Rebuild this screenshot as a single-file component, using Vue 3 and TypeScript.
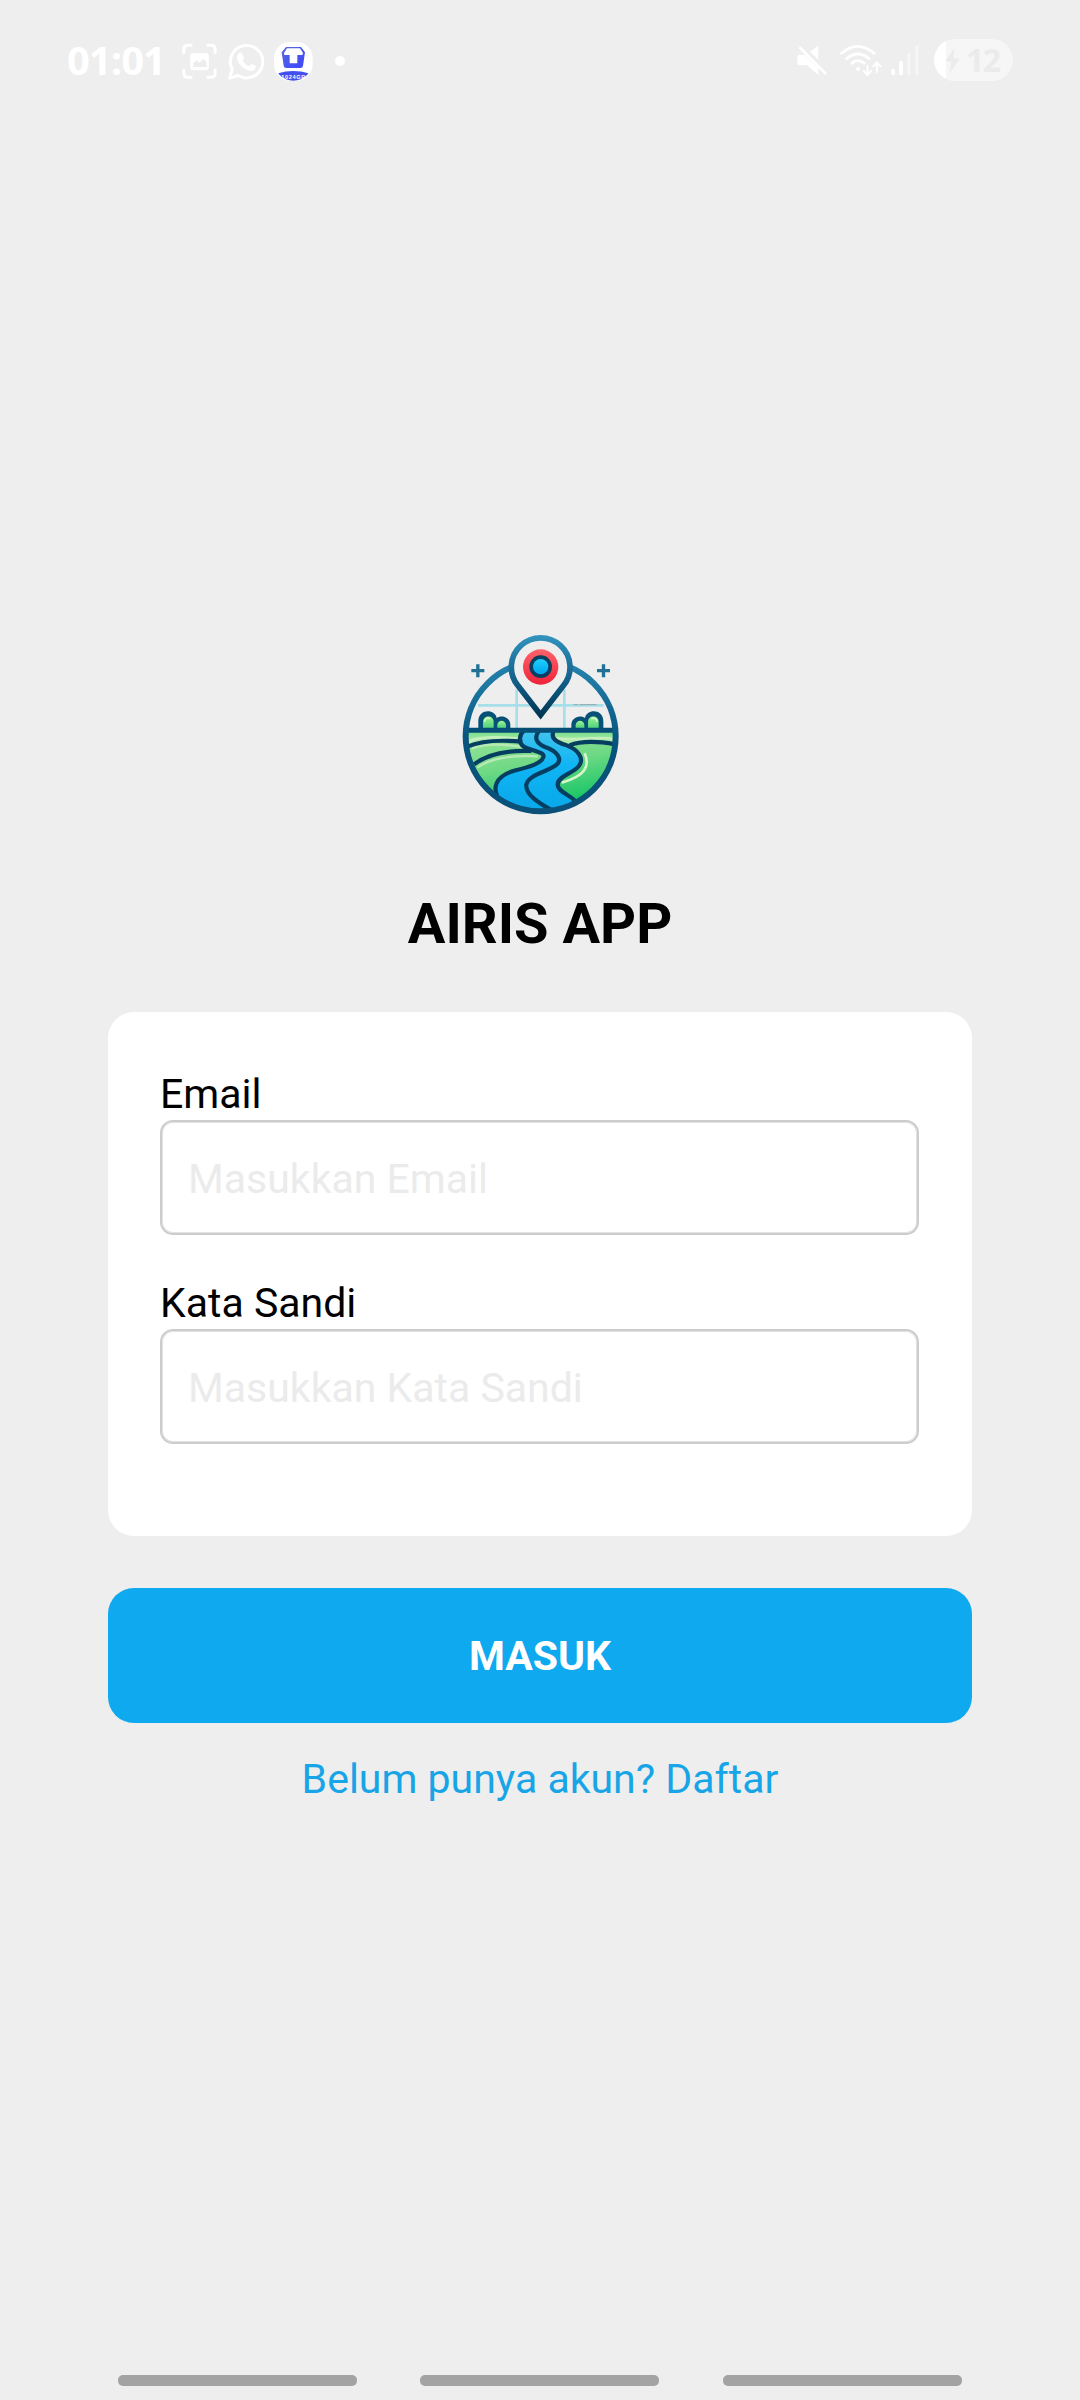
<script setup lang="ts">
import { ref } from 'vue'

interface Field {
  id: string
  label: string
  type: string
  placeholder: string
}

const fields: Field[] = [
  { id: 'email', label: 'Email', type: 'email', placeholder: 'Masukkan Email' },
  { id: 'password', label: 'Kata Sandi', type: 'password', placeholder: 'Masukkan Kata Sandi' },
]

const values = ref<Record<string, string>>({ email: '', password: '' })
</script>

<template>
  <div class="screen">
    <header class="status">
      <div class="status-left">
        <span class="clock">01:01</span>
        <svg class="capture" viewBox="396 0 104 240" width="35" height="80" fill="none" stroke="#fff" stroke-width="9" stroke-linecap="round">
          <path d="M401 98V88q0-12 12-12h10M473 76h10q12 0 12 12v10M495 150v10q0 12-12 12h-10M423 172h-10q-12 0-12-12v-10" />
          <rect x="420" y="99" width="56" height="52" rx="10" fill="#fff" stroke="none" />
          <path d="M429 141v-11l11-9 8 7 12-12 9 11v14z" fill="#ededed" stroke="none" />
        </svg>
        <svg class="whatsapp" viewBox="533 0 112 240" width="37" height="80">
          <path d="M541 175l8-27a49 49 0 1 1 18 19z" fill="none" stroke="#fff" stroke-width="9" stroke-linejoin="round" />
          <path d="M567 101c5-6 10-5 13 1l4 10c1 3-4 7-4 9 4 8 11 14 19 17 3 1 6-7 9-6l10 5c4 2 2 8-1 12-9 9-24 4-37-7-13-12-22-29-13-41z" fill="#fff" />
        </svg>
        <svg class="tera" viewBox="672 0 117 240" width="39" height="80">
          <defs>
            <clipPath id="badge"><circle cx="730" cy="124" r="58" /></clipPath>
            <linearGradient id="bucket" x1="0" y1="0" x2="1" y2="1">
              <stop offset="0" stop-color="#5869dc" />
              <stop offset="1" stop-color="#3c46ff" />
            </linearGradient>
          </defs>
          <rect x="672" y="66" width="116" height="116" rx="48" fill="#fff" />
          <path d="M708 81h45l12 16-6 40q-1 7-8 7h-42q-7 0-8-7l-6-40z" fill="url(#bucket)" />
          <path d="M711 85h39l9 14-2 6h-15v25h-23v-25h-16l-1-6z" fill="#fff" />
          <ellipse cx="730" cy="174" rx="60" ry="21" fill="#4350ee" clip-path="url(#badge)" />
          <text x="730" y="178" text-anchor="middle" textLength="72" class="badge-text">1024GB</text>
        </svg>
        <svg class="dot" viewBox="855 0 30 240" width="10" height="80"><circle cx="870" cy="123" r="15" fill="#fff" /></svg>
      </div>
      <div class="status-right">
        <svg viewBox="80 0 90 240" width="30" height="80" fill="#fff">
          <path d="M144 77v42l-25-24zM81 112q0-8 8-8h14l41 41v20l-34-29H89q-8 0-8-8z" />
          <path d="M98 82l73 75" stroke="#ededed" stroke-width="5" />
          <path d="M90 84l75 76" stroke="#fff" stroke-width="8" stroke-linecap="round" />
        </svg>
        <svg class="wifi" viewBox="210 0 125 240" width="42" height="80" fill="none" stroke="#fff" stroke-width="8" stroke-linecap="round" stroke-linejoin="round">
          <path d="M214 100q49-42 98 0M229 116q34-28 68 0M245 130q18-16 37 0" />
          <circle cx="264" cy="147" r="6" fill="#fff" stroke="none" />
          <path d="M292 137v27M281 153l11 12 11-12M320 156v-28M309 139l11-12 11 12" stroke-width="6" />
        </svg>
        <svg class="signal" viewBox="363 0 84 240" width="28" height="80">
          <rect x="364" y="146" width="11" height="20" rx="5" fill="#fff" />
          <rect x="387" y="122" width="12" height="44" rx="5" fill="#fff" />
          <rect x="411" y="99" width="11" height="67" rx="5" fill="#f5f5f5" />
          <rect x="435" y="77" width="11" height="89" rx="5" fill="#f5f5f5" />
        </svg>
        <div class="battery">
          <svg viewBox="524 80 44 74" width="15" height="25"><path d="M552 80l-27 39h18l-5 35 29-43h-18z" fill="#ebebeb" /></svg>
          <span>12</span>
        </div>
      </div>
    </header>

    <main class="login">
      <svg class="logo" viewBox="0 0 540 600" width="180" height="200">
        <defs>
          <linearGradient id="outline" x1="0" y1="30" x2="0" y2="560" gradientUnits="userSpaceOnUse">
            <stop offset="0" stop-color="#308fb9" />
            <stop offset=".3" stop-color="#1b759f" />
            <stop offset=".6" stop-color="#07537b" />
            <stop offset="1" stop-color="#0b5078" />
          </linearGradient>
          <linearGradient id="pin" x1="0" y1="30" x2="0" y2="280" gradientUnits="userSpaceOnUse">
            <stop offset="0" stop-color="#3293bd" />
            <stop offset=".5" stop-color="#13638d" />
            <stop offset="1" stop-color="#01324f" />
          </linearGradient>
          <linearGradient id="target" x1="0" y1="0" x2="0" y2="1">
            <stop offset="0" stop-color="#ff626b" />
            <stop offset="1" stop-color="#ef2339" />
          </linearGradient>
          <linearGradient id="core" x1="0" y1="0" x2="0" y2="1">
            <stop offset="0" stop-color="#20d0fc" />
            <stop offset="1" stop-color="#00a4ef" />
          </linearGradient>
          <linearGradient id="water" x1="0" y1="0" x2="0" y2="1">
            <stop offset="0" stop-color="#42c4ee" />
            <stop offset=".4" stop-color="#10b5f4" />
            <stop offset="1" stop-color="#08a6e8" />
          </linearGradient>
          <linearGradient id="grass" x1="0" y1="0" x2=".3" y2="1">
            <stop offset="0" stop-color="#a2e89f" />
            <stop offset=".5" stop-color="#70d986" />
            <stop offset="1" stop-color="#10c463" />
          </linearGradient>
          <linearGradient id="strip" x1="0" y1="34" x2="0" y2="66" gradientUnits="userSpaceOnUse">
            <stop offset="0" stop-color="#79df8c" />
            <stop offset="1" stop-color="#b7eeb1" />
          </linearGradient>
          <linearGradient id="bush" x1="0" y1="0" x2="0" y2="1">
            <stop offset="0" stop-color="#9bf295" />
            <stop offset="1" stop-color="#48cf78" />
          </linearGradient>
          <clipPath id="ground"><path d="M48 25h450v20a225 225 0 0 1-450 0z" /></clipPath>
          <g id="bushes">
            <path d="M85 312v-26c0-38 50-38 55-10 20-12 41 2 41 20v16z" fill="#075077" />
            <path d="M99 310v-22c0-22 32-22 32 0v22z" fill="url(#bush)" />
            <path d="M142 308v-10c0-18 25-18 26 0v10z" fill="url(#bush)" />
            <path d="M104 287c0-9 10-13 17-9" fill="none" stroke="#d3ffc5" stroke-width="5" />
          </g>
        </defs>
        <path d="M84 238h376M200 190v120M343 190v120" fill="none" stroke="#a7dfe9" stroke-width="8" />
        <path d="M370 236h14M388 236h52" stroke="#98a9aa" stroke-width="3" />
        <path d="M64 134h39M83.500 115v39M441 134h39M460.500 115v39" stroke="#1f7195" stroke-width="10" />
        <use href="#bushes" />
        <use href="#bushes" transform="translate(545 0) scale(-1 1)" />
        <g transform="translate(0 285)">
          <g clip-path="url(#ground)">
            <rect x="40" y="20" width="470" height="260" fill="url(#grass)" />
            <path d="M50 30h182l-10 32C150 55 90 62 50 76zM308 30h190v39c-60-14-100-5-130 4-30-12-55-12-60-43z" fill="url(#strip)" />
            <path d="M56 60C100 44 160 48 210 54M320 52C380 60 440 44 490 54" fill="none" stroke="#c7efbc" stroke-width="8" />
            <path d="M65 83C110 66 160 70 220 78M82 140C120 112 185 102 264 106" fill="none" stroke="#b9eab4" stroke-width="7" />
            <path d="M404 97C421 137 405 165 335 185" fill="none" stroke="#d7f6c9" stroke-width="8" />
            <path d="M222 28C205 45 203 72 232 82C262 92 285 96 280 112C275 130 235 138 190 150C140 165 120 200 155 245L220 285H370L375 242C365 225 326 215 323 192C320 170 375 155 388 133C400 112 385 88 350 73C315 60 300 50 308 30z" fill="url(#water)" />
            <g fill="none" stroke="#063e61" stroke-width="12.500">
              <path d="M222 28C205 45 203 72 232 82C262 92 285 96 280 109C275 128 235 138 190 150C140 165 118 200 155 248" />
              <path d="M268 28C251 50 258 67 285 78C320 90 338 112 321 130C298 152 238 158 229 190C225 220 265 245 302 266" />
              <path d="M312 28C300 50 315 62 350 73C385 86 402 112 388 133C372 157 323 165 323 190C323 215 365 222 380 246" />
              <path d="M52 77C90 60 150 56 217 62M72 130C112 99 175 87 245 90M358 73C395 59 445 61 496 70" />
            </g>
          </g>
          <path d="M48 28H498" stroke="#064e76" stroke-width="15" />
        </g>
        <circle cx="272" cy="331" r="225" fill="none" stroke="url(#outline)" stroke-width="18" />
        <path d="M272 267L203 178A88 88 0 1 1 341 178z" fill="#eee" stroke="url(#pin)" stroke-width="17" />
        <circle cx="272" cy="123" r="53" fill="url(#target)" />
        <circle cx="272" cy="122" r="34" fill="#093f61" />
        <circle cx="272" cy="122" r="23" fill="url(#core)" />
      </svg>
      <h1>AIRIS APP</h1>
      <form class="card" @submit.prevent>
        <div v-for="field in fields" :key="field.id" class="field">
          <label :for="field.id">{{ field.label }}</label>
          <input :id="field.id" v-model="values[field.id]" :type="field.type" :placeholder="field.placeholder" />
        </div>
      </form>
      <button class="submit" type="button">MASUK</button>
      <a class="register">Belum punya akun? Daftar</a>
    </main>

    <nav class="gestures"><i v-for="n in 3" :key="n"></i></nav>
  </div>
</template>

<style>
body {
  margin: 0;
  background: #eee;
}
</style>

<style scoped>
.screen {
  width: 1080px;
  height: 2400px;
  display: flex;
  flex-direction: column;
  background: #eee;
  font-family: Roboto, sans-serif;
  box-sizing: border-box;
  overflow: hidden;
}
.screen * {
  box-sizing: border-box;
}
svg {
  display: block;
  flex: none;
}
.status {
  height: 100px;
  padding: 20px 67px 0 67px;
  display: flex;
  justify-content: space-between;
  font-family: 'Open Sans', sans-serif;
  color: #fff;
}
.status-left,
.status-right {
  display: flex;
  height: 80px;
}
.clock {
  width: 115px;
  font-size: 40px;
  line-height: 79px;
  font-weight: 700;
  letter-spacing: -1px;
}
.whatsapp {
  margin-left: 10px;
}
.tera {
  margin-left: 10px;
}
.dot {
  margin-left: 22px;
}
.badge-text {
  font: 700 17px 'Liberation Sans', sans-serif;
  fill: #fff;
}
.wifi {
  margin-left: 13px;
}
.signal {
  margin-left: 9px;
}
.battery {
  width: 79px;
  height: 42px;
  margin: 19px 0 0 15px;
  padding-left: 11px;
  display: flex;
  align-items: center;
  border-radius: 21px;
  background: linear-gradient(90deg, #fff 12px, #f6f6f6 12px);
  color: #ebebeb;
  font-size: 32px;
  line-height: 42px;
  font-weight: 700;
  letter-spacing: -1.5px;
}
.battery span {
  margin-left: 6px;
}
.login {
  width: 864px;
  margin: 526px auto 0;
  flex: 1;
  display: flex;
  flex-direction: column;
  align-items: center;
}
h1 {
  height: 66px;
  margin: 65px 0 55px;
  font-size: 56px;
  line-height: 66px;
  font-weight: 700;
  color: #000;
}
.card {
  width: 864px;
  height: 524px;
  padding: 59px 53px 0 52px;
  display: flex;
  flex-direction: column;
  gap: 45px;
  border-radius: 26px;
  background: #fff;
}
.field {
  display: flex;
  flex-direction: column;
}
label {
  height: 49px;
  font-size: 41px;
  line-height: 47px;
  color: #000;
}
input {
  width: 100%;
  height: 115px;
  padding: 2px 26px 0;
  border: 2px solid #ccc;
  border-radius: 13px;
  box-shadow: inset 0 0 0 1px #e3e3e3;
  background: #fff;
  font: 400 41px Roboto, sans-serif;
  outline: none;
}
input::placeholder {
  color: #ebebeb;
  opacity: 1;
}
.submit {
  width: 864px;
  height: 135px;
  margin: 52px 0 0;
  padding: 2px 0 0;
  border: 0;
  border-radius: 26px;
  background: #0fa9f0;
  color: #fff;
  font: 700 41px/49px Roboto, sans-serif;
}
.register {
  margin-top: 32px;
  font-size: 41px;
  line-height: 49px;
  color: #18a5e7;
}
.gestures {
  height: 25px;
  padding-left: 118px;
  display: flex;
  gap: 63px;
}
.gestures i {
  width: 239px;
  height: 11px;
  border-radius: 5px;
  background: #a3a3a3;
}
.gestures i:last-child {
  margin-left: 1px;
}
</style>
